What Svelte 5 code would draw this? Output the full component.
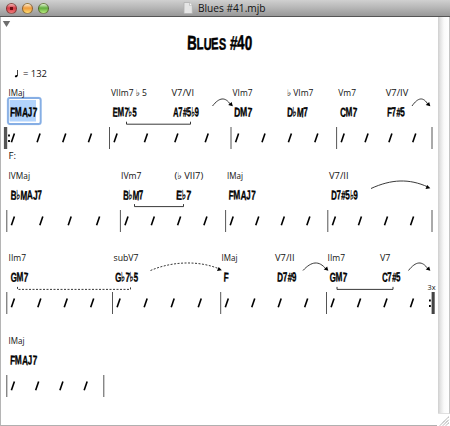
<script>
  // [text, x, width]
  const systems = [
    {
      height: 83,
      bars: [6.8, 109.5, 231, 336.6, 432],
      startRepeat: true,
      key: 'F:',
      degrees: [['IMaj', 8.5, 16], ['VIIm7 ♭ 5', 111, 36], ['V7/VI', 171.5, 22.5], ['VIm7', 232.5, 20], ['♭ VIm7', 287, 26.5], ['Vm7', 338.3, 17.7], ['V7/IV', 385.8, 22.5]],
      chords: [['FMAJ7', 10, 27], ['EM7♭5', 112.5, 24], ['A7#5♭9', 173, 26], ['DM7', 234, 18], ['D♭M7', 287, 21], ['CM7', 340, 17], ['F7#5', 387, 18]],
      brackets: [{ x1: 126.5, x2: 190.5, y: 44 - 0.5 - 4.3 }],
      arcs: [{ x1: 212.5, x2: 232, y: 21, rise: 7 }, { x1: 412, x2: 429.5, y: 21, rise: 7 }]
    },
    {
      height: 82,
      bars: [6.8, 120.4, 225.6, 327.8, 432],
      degrees: [['IVMaj', 8.5, 21.5], ['IVm7', 121, 20.5], ['(♭ VII7)', 174.5, 28.7], ['IMaj', 227, 16], ['V7/II', 329, 19.5]],
      chords: [['B♭MAJ7', 10.5, 31.5], ['B♭M7', 123, 20.5], ['E♭7', 176, 15], ['FMAJ7', 228.5, 27], ['D7#5♭9', 331, 27]],
      brackets: [{ x1: 134.5, x2: 183.5, y: 38.6 }],
      arcs: [{ x1: 371, x2: 429.5, y: 20.5, rise: 7.5 }]
    },
    {
      height: 83,
      bars: [6.8, 112.5, 220.7, 326.5, 432.3],
      endRepeat: '3x',
      degrees: [['IIm7', 8.5, 17.5], ['subV7', 113.5, 25], ['IMaj', 221.5, 16], ['V7/II', 275, 19.5], ['IIm7', 327.5, 17.5], ['V7', 380, 10.5]],
      chords: [['GM7', 10.5, 17.5], ['G♭7♭5', 115, 23], ['F', 223.5, 5], ['D7#9', 277, 19.5], ['GM7', 329.5, 17.5], ['C7#5', 382, 18.5]],
      brackets: [{ x1: 17.5, x2: 130.5, y: 39.4, dashed: true }, { x1: 337, x2: 393, y: 39.4 }],
      arcs: [{ x1: 150.5, x2: 221, y: 20.5, rise: 7.5, dashed: true }, { x1: 303, x2: 327.5, y: 20.5, rise: 7.5 }, { x1: 408.5, x2: 429.5, y: 20.5, rise: 7.5 }]
    },
    {
      height: 83,
      bars: [6.8, 103.8],
      degrees: [['IMaj', 8.5, 16]],
      chords: [['FMAJ7', 10, 27]],
      brackets: [],
      arcs: []
    }
  ];

  const slashes = (bars) =>
    bars.slice(0, -1).flatMap((x, i) =>
      [0, 1, 2, 3].map((beat) => x + 6 + (beat * (bars[i + 1] - x)) / 4)
    );

  const arcPath = (a) => {
    const bend = Math.min((a.x2 - a.x1) * 0.35, 22);
    return `M${a.x1} ${a.y}C${a.x1 + bend} ${a.y - a.rise * 1.25} ${a.x2 - bend} ${a.y - a.rise * 1.35} ${a.x2 - 1.5} ${a.y - 1.5}`;
  };

  const headPath = (a) =>
    a.x2 - a.x1 > 40
      ? `M${a.x2 + 0.8} ${a.y - 0.2}l-4.8 .6l1.7-3.8z`
      : `M${a.x2 + 0.8} ${a.y + 0.3}l-4.6-1.2l3.5-3.2z`;
</script>

<div class="window">
  <header>
    <div class="lights">
      <i class="red"></i><i class="amber"></i><i class="green"></i>
    </div>
    <div class="caption">
      <svg class="doc" width="10" height="12" viewBox="0 0 10 12">
        <path d="M1 .5H6.5L9.3 3.4V11.5H1z" fill="#e5e5e5" stroke="#b0b0b0" stroke-width=".8" />
        <path d="M6.5 .5V3.4H9.3" fill="#fff" stroke="#aaa" stroke-width=".6" />
      </svg>
      <svg class="filename" width="80" height="16">
        <text x="0" y="12" textLength="67.5" lengthAdjust="spacingAndGlyphs">Blues #41.mjb</text>
      </svg>
    </div>
  </header>

  <div class="body">
    <main>
      <svg class="heading" width="436" height="68" viewBox="0 0 436 68">
        <path d="M2.8 4H10.2L6.5 10z" fill="#6e6e6e" />
        <text class="title" x="187" y="32.6" textLength="65" lengthAdjust="spacingAndGlyphs" rotate="2 -2 3 -2 2 0 4 -3 4">B<tspan font-size="16.5">LUES</tspan> #40</text>
        <ellipse cx="16.2" cy="59.2" rx="1.4" ry="1" transform="rotate(-20 16.2 59.2)" />
        <path d="M17.5 53V59" stroke="#111" stroke-width=".8" />
        <text class="degree" x="23" y="60" textLength="24" lengthAdjust="spacingAndGlyphs">= 132</text>
      </svg>

      {#each systems as s}
        <svg class="system" width="436" height={s.height} viewBox="0 0 436 {s.height}">
          {#if s.startRepeat}
            <rect x="6.7" y="11.7" width="35.2" height="28.6" rx="3.5" fill="#cfe1f7" />
            <rect class="focus" x="8" y="13" width="32.6" height="26" rx="2" />
            <rect x="9.5" y="15" width="26.5" height="21.5" fill="#b3d4fc" />
            <path d="M3.9 42h3.3v22H3.9z" fill="#555" />
            <path d="M8.1 49.5h1.8v2H8.1zM8.1 55h1.8v2H8.1z" />
          {/if}

          {#each s.degrees as [text, x, w]}
            <text class="degree" {x} y="10.7" textLength={w} lengthAdjust="spacingAndGlyphs">{text}</text>
          {/each}
          {#each s.chords as [text, x, w]}
            <text class="chord" {x} y="31.6" textLength={w} lengthAdjust="spacingAndGlyphs" rotate="3 -3 4 -3 3 -2">{text}</text>
          {/each}

          {#each s.brackets as b}
            <path class="line" class:dashed={b.dashed} d="M{b.x1} {b.y - 2.5}V{b.y}H{b.x2}V{b.y - 2.5}" />
          {/each}
          {#each s.arcs as a}
            <path class="line" class:dashed={a.dashed} d={arcPath(a)} />
            <path d={headPath(a)} />
          {/each}

          {#each s.bars as x, i}
            {#if !(s.startRepeat && i === 0) && !(s.endRepeat && i === s.bars.length - 1)}
              <path class="barline" d="M{x} 42V64" />
            {/if}
          {/each}
          {#each slashes(s.bars) as x}
            <path class="slash" d="M{x - 1.4} 57.2L{x + 1.6} 48.4" />
          {/each}

          {#if s.key}
            <text class="key" x="8.5" y="73.6" textLength="7.5" lengthAdjust="spacingAndGlyphs">{s.key}</text>
          {/if}
          {#if s.endRepeat}
            <text class="count" x="427.5" y="40.4" textLength="8" lengthAdjust="spacingAndGlyphs">{s.endRepeat}</text>
            <path d="M429 49.5h1.8v2H429zM429 55h1.8v2H429z" />
            <path d="M431.6 42h3.1v22h-3.1z" fill="#444" />
          {/if}
        </svg>
      {/each}
    </main>

    <aside>
      <div class="track"></div>
      <svg class="grip" width="12" height="11" viewBox="0 0 12 11">
        <path d="M2 10.5L11 1.5M5 10.5L11 4.5M8 10.5L11 7.5" stroke="#888" stroke-width="1" stroke-dasharray="1.2 .5" />
      </svg>
    </aside>
  </div>
</div>

<style>
  :global(body) {
    margin: 0;
    background: #fff;
  }
  .window {
    box-sizing: border-box;
    width: 450px;
    height: 426px;
    display: flex;
    flex-direction: column;
    overflow: hidden;
    background: #fff;
  }
  svg {
    display: block;
    flex: none;
  }
  header {
    box-sizing: border-box;
    height: 17px;
    flex: none;
    display: grid;
    grid-template-columns: 183px 1fr;
    align-items: center;
    border-bottom: 1px solid #555;
    background: linear-gradient(#d0d0d0, #b8b8b8 45%, #989898);
  }
  .lights {
    display: flex;
    gap: 5px;
    padding-left: 6px;
  }
  .lights i {
    box-sizing: border-box;
    width: 11px;
    height: 11px;
    border-radius: 50%;
    border: 1px solid rgba(50, 30, 20, 0.5);
  }
  .red {
    background: radial-gradient(circle at 50% 50%, #6c0d12 0 1.4px, transparent 2px), linear-gradient(#f5b5b5, #d53a44 45%, #f07a7a);
  }
  .amber {
    background: linear-gradient(#fff0cf, #ee9a3c 45%, #ffdc6e);
  }
  .green {
    background: linear-gradient(#e0f7cf, #62ad3e 45%, #b5ec7c);
  }
  .caption {
    display: flex;
    align-items: center;
    gap: 5px;
  }
  .filename text {
    font: 11px "Open Sans", "Noto Sans", sans-serif;
    fill: #111;
  }
  .body {
    flex: 1;
    min-height: 0;
    display: grid;
    grid-template-columns: 437px 13px;
  }
  main {
    box-sizing: border-box;
    border-left: 1px solid #b5b5b5;
    border-bottom: 1px solid #b0b0b0;
    overflow: hidden;
  }
  main svg {
    margin-left: -1px;
  }
  .title {
    font: bold 20px "Liberation Sans", sans-serif;
    stroke: #000;
    stroke-width: 0.5;
  }
  .degree {
    font: 9px "Open Sans", "DejaVu Sans", sans-serif;
    fill: #111;
  }
  .key {
    font: 9.5px "Open Sans", sans-serif;
    fill: #111;
  }
  .count {
    font: 8px "Open Sans", sans-serif;
    fill: #111;
  }
  .chord {
    font: bold 13px "Liberation Sans", "DejaVu Sans", sans-serif;
    stroke: #000;
    stroke-width: 0.35;
  }
  .focus {
    fill: #fff;
    stroke: #86aee4;
    stroke-width: 1.8;
  }
  .line {
    fill: none;
    stroke: #222;
    stroke-width: 0.9;
  }
  .dashed {
    stroke-dasharray: 2 1.5;
  }
  .barline {
    stroke: #555;
    stroke-width: 1;
  }
  .slash {
    stroke: #000;
    stroke-width: 1.6;
  }
  aside {
    display: flex;
    flex-direction: column;
    align-items: flex-end;
  }
  .track {
    box-sizing: border-box;
    width: 12px;
    flex: 1;
    border-right: 1px solid #c4c4c4;
    border-bottom: 1px solid #e0e0e0;
    background: linear-gradient(90deg, #cfcfcf, #e6e6e6 25%, #fafafa 55%, #fff);
  }
  .grip {
    margin-top: 1px;
  }
</style>
